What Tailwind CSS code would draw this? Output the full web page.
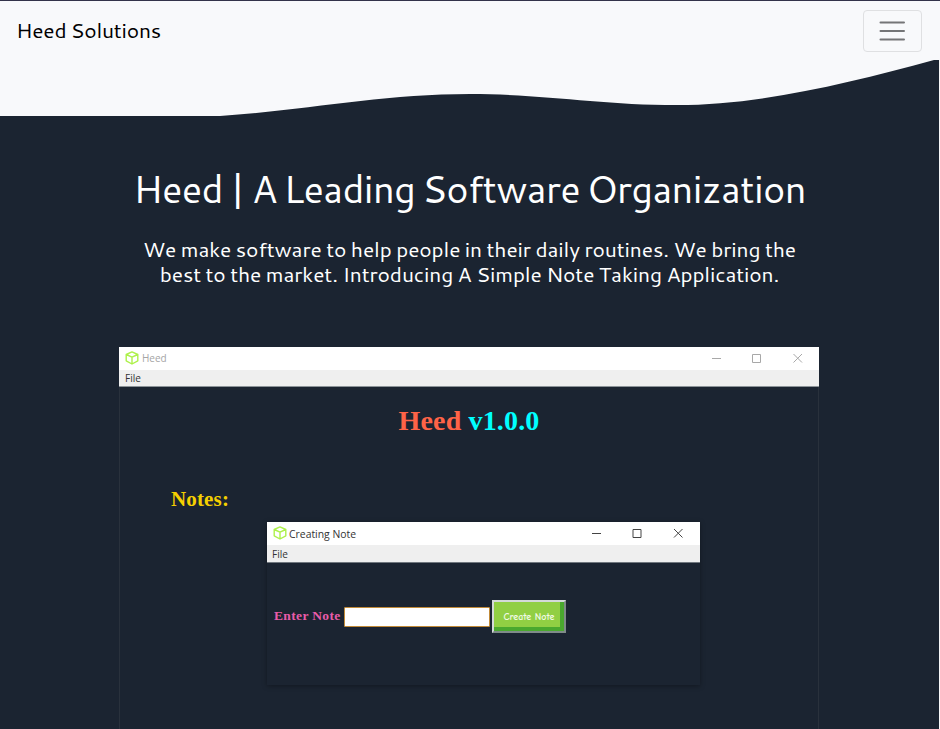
<!DOCTYPE html>
<html lang="en">
<head>
<meta charset="utf-8">
<title>Heed Solutions</title>
<script src="https://cdn.jsdelivr.net/npm/@tailwindcss/browser@4"></script>
</head>
<body class="h-[729px] overflow-hidden bg-[#f8f9fa] font-[Cantarell,'Noto_Sans',sans-serif]">
<div class="flex h-[729px] w-full flex-col border-t border-[#33334a]">
  <nav class="flex h-[59px] shrink-0 items-start justify-between bg-[#f8f9fb] pr-[18px] pl-[16px]">
    <a class="mt-[14px] text-[21px] leading-[30px] tracking-[-0.2px] [word-spacing:-1.5px] whitespace-nowrap text-black">Heed Solutions</a>
    <button aria-label="Menu" class="mt-[9px] flex h-[42px] w-[59px] items-center justify-center rounded-[4px] border border-[#dfe0e2]">
      <svg class="mr-[2px] size-[30px]" viewBox="0 0 30 30" fill="none" stroke="#747577" stroke-width="2" stroke-linecap="round"><path d="M3.5 6.5H27M3.5 15H27M3.5 23.5H27"/></svg>
    </button>
  </nav>
  <main class="mr-px flex min-h-0 flex-1 flex-col overflow-hidden bg-[#1b2431]">
    <svg class="h-[56px] w-[939px] shrink-0" viewBox="0 0 939 56"><path fill="#f8f9fb" d="M0 0H934C850 23 760 45 677 45C600 45 545 34 470 34C380 34 310 50 220 56H0Z"/></svg>
    <h1 class="mt-[48px] h-[48px] text-center text-[38px] leading-[48px] tracking-[-0.68px] [word-spacing:-3.2px] whitespace-nowrap text-white">Heed | A Leading Software Organization</h1>
    <div class="mt-[25px] flex flex-col items-center text-[21px] leading-[25px] tracking-[-0.13px] [word-spacing:-1.1px] whitespace-nowrap text-white">
      <p>We make software to help people in their daily routines. We bring the</p>
      <p>best to the market. Introducing A Simple Note Taking Application.</p>
    </div>
    <section class="mt-[60px] ml-[119px] flex h-[420px] w-[700px] shrink-0 flex-col border-x border-[#29313c]">
      <header class="-mx-px flex h-[23px] shrink-0 items-center bg-white pl-[6px] font-['Open_Sans','Noto_Sans',sans-serif] text-[10px] text-[#a5a5a5]">
        <svg class="mr-[3px] mb-[2px] h-[14px] w-[14px]" viewBox="0 0 14 14" fill="none" stroke="#adf14a" stroke-width="1.4" stroke-linejoin="round"><path d="M7 .9L12.8 3.5V9.8L7 13L1.2 9.8V3.5ZM1.2 3.5L7 6.2L12.8 3.5M7 6.2V13"/></svg>
        <span class="flex-1">Heed</span>
        <svg class="mr-[14px] mb-[2px] h-[12px] w-[94px]" viewBox="0 0 94 12" fill="none" stroke="#a8a8a8"><path d="M1 6.5H10M41.5 2.5H49.5V10.5H41.5ZM82.5 2L91 10.5M91 2L82.5 10.5"/></svg>
      </header>
      <div class="-mx-px h-[17px] shrink-0 border-b border-[#8c9398] bg-[#efefef] pl-[6px] font-['Open_Sans','Noto_Sans',sans-serif] text-[10px] leading-[16px] text-[#333]">File</div>
      <h2 class="mt-[18px] text-center font-['Liberation_Serif',serif] text-[28px] leading-[32px] font-bold tracking-[0.15px] whitespace-nowrap text-[#ff6347]">Heed <span class="text-[#00ffff]">v1.0.0</span></h2>
      <h3 class="mt-[50px] ml-[51px] font-['Liberation_Serif',serif] text-[21px] leading-[24px] font-bold tracking-[0.15px] text-[#f5d000]">Notes:</h3>
      <div class="mt-[11px] ml-[147px] flex h-[163px] w-[433px] shrink-0 flex-col shadow-[0_1px_5px_rgba(0,0,0,.35)]">
        <header class="flex h-[23px] shrink-0 items-center bg-white pl-[6px] font-['Open_Sans','Noto_Sans',sans-serif] text-[10.4px] text-[#333]">
          <svg class="mr-[2px] mb-[1px] h-[14px] w-[14px]" viewBox="0 0 14 14" fill="none" stroke="#adf14a" stroke-width="1.4" stroke-linejoin="round"><path d="M7 .9L12.8 3.5V9.8L7 13L1.2 9.8V3.5ZM1.2 3.5L7 6.2L12.8 3.5M7 6.2V13"/></svg>
          <span class="flex-1 pt-[2px]">Creating Note</span>
          <svg class="mr-[15px] mb-[2px] h-[12px] w-[94px]" viewBox="0 0 94 12" fill="none" stroke="#444"><path d="M1 6.5H10M42 2.5H50V10.5H42ZM83 2L91.5 10.5M91.5 2L83 10.5"/></svg>
        </header>
        <div class="h-[18px] shrink-0 border-b border-[#70777e] bg-[#efefef] pl-[5px] font-['Open_Sans','Noto_Sans',sans-serif] text-[10px] leading-[18px] text-[#333]">File</div>
        <div class="mt-[37px] flex h-[33px] items-center pl-[7px]">
          <label class="w-[70px] font-['Liberation_Serif',serif] text-[13.5px] font-bold tracking-[0.35px] whitespace-nowrap text-[#e95ca9]">Enter Note</label>
          <div class="h-[20px] w-[146px] rounded-[1px] border border-[#c18a38] bg-white"></div>
          <button class="ml-[2px] flex h-[33px] w-[74px] items-center justify-center border-2 border-t-[#d4d9d8] border-r-[#7f8b88] border-b-[#7f8b88] border-l-[#d4d9d8] bg-[#91cf43] pt-px font-['Comic_Neue','Comic_Sans_MS',Lato,sans-serif] text-[10px] font-bold whitespace-nowrap text-[#f0fae5] shadow-[inset_-4px_-4px_0_#4aa82e]">Create Note</button>
        </div>
      </div>
    </section>
  </main>
</div>
</body>
</html>
